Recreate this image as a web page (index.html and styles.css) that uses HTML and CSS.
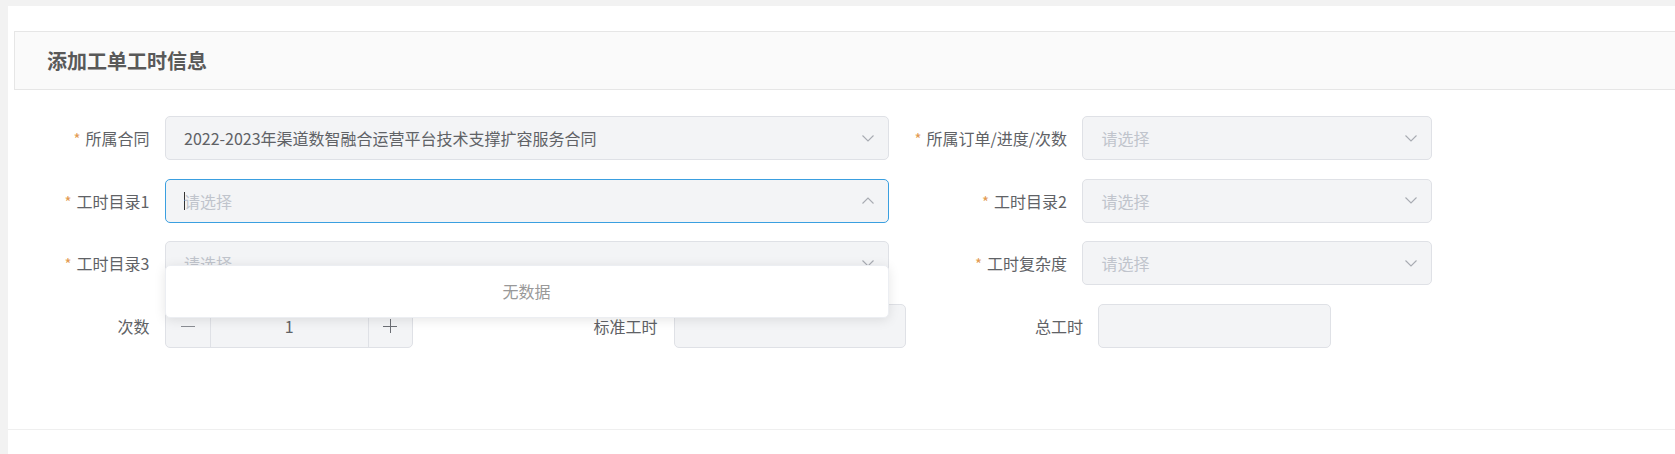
FILE: index.html
```html
<!DOCTYPE html>
<html lang="zh-CN">
<head>
<meta charset="utf-8">
<title>添加工单工时信息</title>
<link rel="stylesheet" href="styles.css">
</head>
<body>
<div class="panel">
  <div class="section-head"><h2 class="section-title">添加工单工时信息</h2></div>
  <form class="form">
    <div class="row">
      <label class="label w-a"><span class="req">*</span>所属合同</label>
      <div class="select w-lg">
        <span class="value">2022-2023年渠道数智融合运营平台技术支撑扩容服务合同</span>
        <svg class="chev" width="12" height="7" viewBox="0 0 12 7"><path d="M0.5 0.5 L6 6 L11.5 0.5" fill="none" stroke="#a8abb2" stroke-width="1.1"/></svg>
      </div>
      <label class="label w-b"><span class="req">*</span>所属订单/进度/次数</label>
      <div class="select w-sm">
        <span class="placeholder">请选择</span>
        <svg class="chev" width="12" height="7" viewBox="0 0 12 7"><path d="M0.5 0.5 L6 6 L11.5 0.5" fill="none" stroke="#a8abb2" stroke-width="1.1"/></svg>
      </div>
    </div>
    <div class="row">
      <label class="label w-a"><span class="req">*</span>工时目录1</label>
      <div class="select w-lg focused">
        <span class="placeholder"><span class="caret"></span>请选择</span>
        <svg class="chev" width="12" height="7" viewBox="0 0 12 7"><path d="M0.5 6.5 L6 1 L11.5 6.5" fill="none" stroke="#a8abb2" stroke-width="1.1"/></svg>
        <div class="popup">无数据</div>
      </div>
      <label class="label w-b"><span class="req">*</span>工时目录2</label>
      <div class="select w-sm">
        <span class="placeholder">请选择</span>
        <svg class="chev" width="12" height="7" viewBox="0 0 12 7"><path d="M0.5 0.5 L6 6 L11.5 0.5" fill="none" stroke="#a8abb2" stroke-width="1.1"/></svg>
      </div>
    </div>
    <div class="row">
      <label class="label w-a"><span class="req">*</span>工时目录3</label>
      <div class="select w-lg">
        <span class="placeholder">请选择</span>
        <svg class="chev" width="12" height="7" viewBox="0 0 12 7"><path d="M0.5 0.5 L6 6 L11.5 0.5" fill="none" stroke="#a8abb2" stroke-width="1.1"/></svg>
      </div>
      <label class="label w-b"><span class="req">*</span>工时复杂度</label>
      <div class="select w-sm">
        <span class="placeholder">请选择</span>
        <svg class="chev" width="12" height="7" viewBox="0 0 12 7"><path d="M0.5 0.5 L6 6 L11.5 0.5" fill="none" stroke="#a8abb2" stroke-width="1.1"/></svg>
      </div>
    </div>
    <div class="row">
      <label class="label w-a">次数</label>
      <div class="stepper">
        <span class="step-btn minus"><svg width="14" height="14" viewBox="0 0 14 14"><path d="M0 7.5 H14" stroke="#8a8d93" stroke-width="1"/></svg></span>
        <span class="step-value">1</span>
        <span class="step-btn plus"><svg width="14" height="14" viewBox="0 0 14 14"><path d="M0 7.5 H14 M7.5 0 V14" stroke="#6b6e74" stroke-width="1"/></svg></span>
      </div>
      <label class="label w-c">标准工时</label>
      <div class="input w-in1"></div>
      <label class="label w-d">总工时</label>
      <div class="input w-in2"></div>
    </div>
  </form>
</div>
</body>
</html>
```
FILE: styles.css
```css
html, body {
  margin: 0;
  padding: 0;
}
body {
  background: #f2f2f2;
  font-family: "Noto Sans CJK SC", "Microsoft YaHei", "Noto Sans", sans-serif;
  color: #606266;
  overflow: hidden;
}
.panel {
  margin: 6px 0 0 8px;
  padding-top: 25px;
  background: #fff;
  min-height: 423px;
}
.section-head {
  margin: 0 0 0 6px;
  height: 59px;
  box-sizing: border-box;
  border: 1px solid #e6e6e6;
  border-right: 0;
  background: #fafafa;
  display: flex;
  align-items: center;
  padding-left: 32px;
}
.section-title {
  margin: 0;
  font-size: 20px;
  font-weight: 700;
  color: #595959;
  line-height: 1;
}
.form {
  padding: 26px 0 62px 0;
  border-bottom: 1px solid #efefef;
}
.row {
  display: flex;
  height: 44px;
  margin-bottom: 18.67px;
}
.label {
  box-sizing: border-box;
  flex: none;
  text-align: right;
  padding-right: 15px;
  font-size: 16px;
  line-height: 44px;
  color: #606266;
  white-space: nowrap;
}
.req {
  color: #e39a52;
  margin-right: 5px;
  font-size: 15px;
}
.w-a { width: 156.5px; }
.w-b { width: 193.5px; }
.w-c { width: 260.5px; padding-right: 16px; }
.w-d { width: 192.5px; }
.select, .input, .stepper {
  box-sizing: border-box;
  flex: none;
  height: 44px;
  border: 1px solid #dfe1e6;
  border-radius: 5px;
  background: #f3f4f6;
}
.select {
  position: relative;
  display: flex;
  align-items: center;
  justify-content: space-between;
  padding: 0 14px 0 18.5px;
  font-size: 16px;
}
.select.focused {
  border-color: #3a9fe0;
}
.w-lg { width: 724px; }
.w-sm { width: 349.5px; }
.w-in1 { width: 232px; }
.w-in2 { width: 232.5px; }
.value {
  color: #606266;
  white-space: nowrap;
}
.placeholder {
  color: #c0c4cc;
  white-space: nowrap;
  display: inline-flex;
  align-items: center;
}
.caret {
  display: inline-block;
  width: 1px;
  height: 18px;
  background: #333;
  margin-right: -1px;
}
.chev {
  flex: none;
  display: block;
}
.popup {
  position: absolute;
  left: -1px;
  top: 85px;
  width: 724px;
  height: 53px;
  box-sizing: border-box;
  background: #fff;
  border: 1px solid #eceef2;
  border-radius: 5px;
  box-shadow: 0 2px 12px rgba(0, 0, 0, 0.1);
  z-index: 10;
  display: flex;
  align-items: center;
  justify-content: center;
  font-size: 16px;
  color: #999;
}
.stepper {
  width: 248.5px;
  display: flex;
  align-items: stretch;
}
.step-btn {
  flex: none;
  display: flex;
  align-items: center;
  justify-content: center;
}
.step-btn svg { display: block; }
.minus {
  width: 44.5px;
  border-right: 1px solid #dfe1e6;
}
.plus {
  width: 43.5px;
  border-left: 1px solid #dfe1e6;
}
.step-value {
  flex: 1;
  text-align: center;
  line-height: 42px;
  font-size: 16px;
  color: #606266;
}
```
